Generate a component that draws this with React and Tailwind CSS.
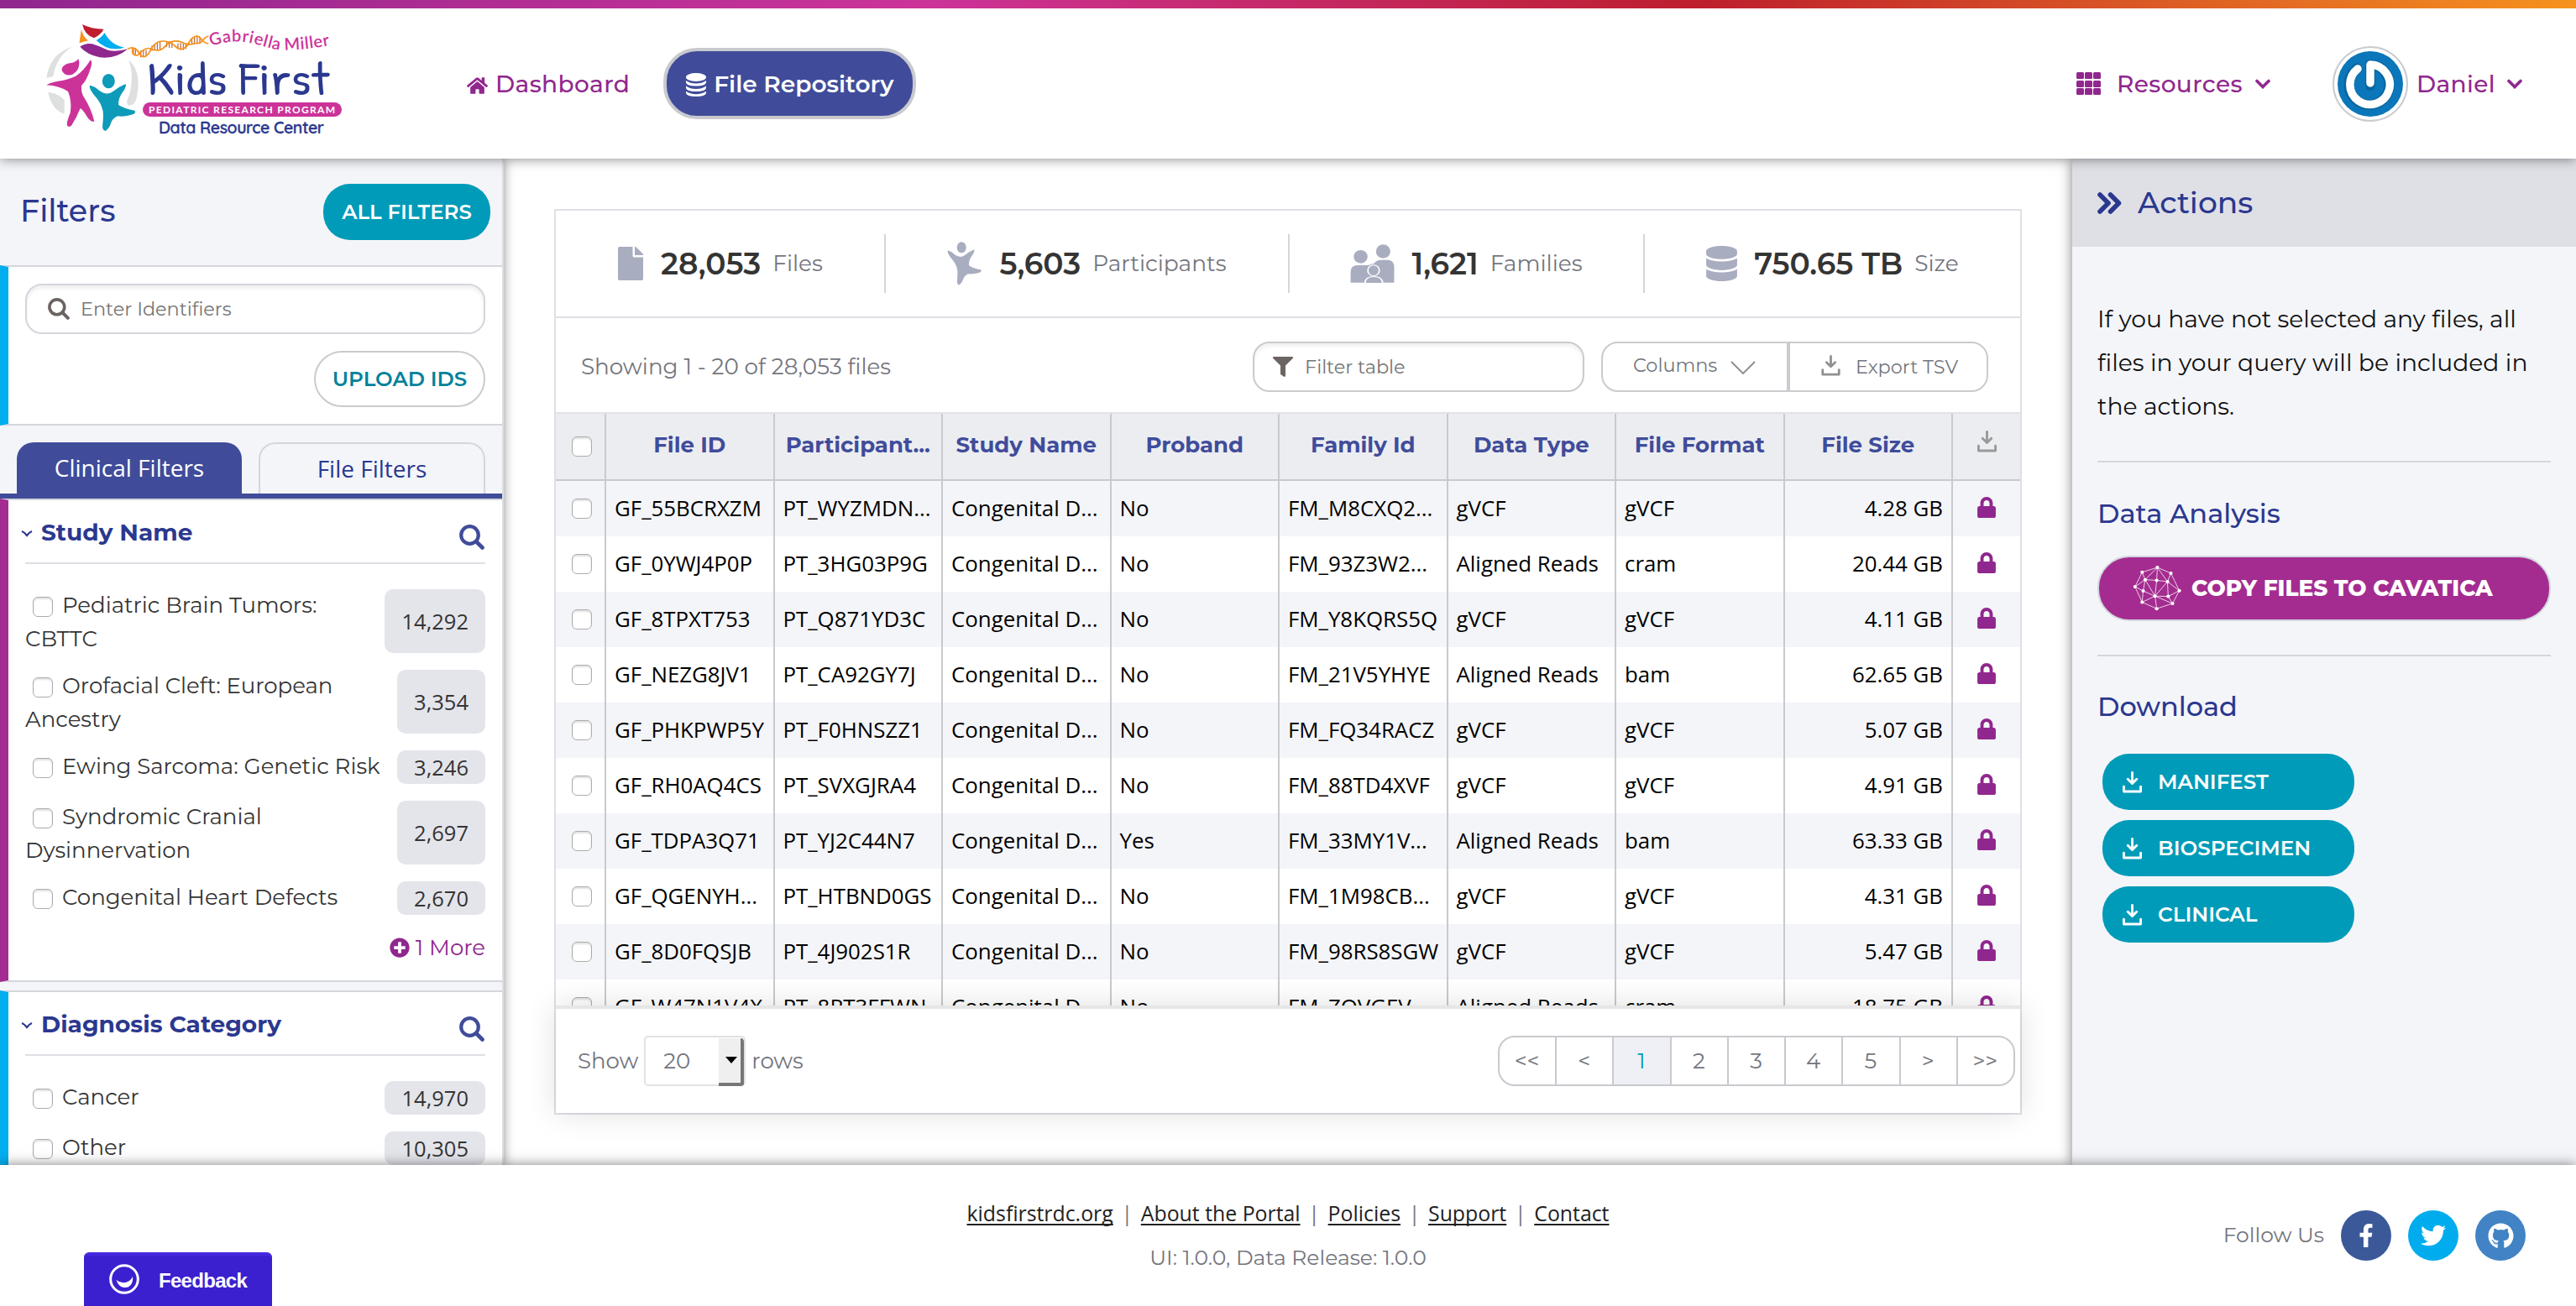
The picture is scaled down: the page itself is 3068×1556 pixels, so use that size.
import React from "react";
import {
  FaHome,
  FaDatabase,
  FaFile,
  FaFilter,
  FaLock,
  FaPlusCircle,
  FaFacebookF,
  FaTwitter,
  FaGithub,
} from "react-icons/fa";

const CHILD_BODY =
  "M270 308 Q285 310 300 328 Q322 346 340 330 Q360 312 378 303 Q382 310 372 328 Q355 355 357 378 Q375 392 405 398 Q412 405 400 412 Q375 422 355 418 Q340 425 335 440 Q330 460 318 471 Q307 468 309 450 Q312 420 310 400 Q305 370 285 345 Q268 320 270 308Z";

function Logo() {
  return (
    <svg className="h-[135px] w-[355px]" viewBox="55 28 355 135" fill="none">
      <g transform="scale(0.3954 0.3333)">
        <g fill="#dedfdf">
          <path d="M217 170 Q150 195 140 282 L160 275 Q170 205 217 170Z" />
          <path d="M145 332 Q180 340 194 360 L194 410 Q155 395 145 332Z" />
          <path d="M387 217 Q430 260 410 360 Q400 385 385 378 Q378 370 390 340 Q405 270 387 217Z" />
        </g>
        <path fill="#be1e2d" d="M248 90 Q275 107 312 107 Q306 125 283 139 Q255 128 248 90Z" />
        <path fill="#f6921e" d="M245 108 Q250 135 266 148 Q252 152 239 157 Q242 130 245 108Z" />
        <path fill="#00aeef" d="M315 120 Q335 165 375 173 Q325 190 290 147 Q305 138 315 120Z" />
        <path fill="#90278e" d="M241 170 Q258 155 278 160 Q300 168 325 182 Q350 190 385 178 Q350 215 300 208 Q262 198 241 170Z" />
        <g fill="#cc3399">
          <path d="M236 213 Q243 235 232 255 Q215 280 195 268 Q183 255 187 245 Q195 230 215 228 Q230 224 236 213Z" />
          <path d="M273 217 Q280 225 272 250 Q262 290 245 310 Q244 330 250 345 Q275 390 284 437 Q275 440 265 425 Q250 395 242 390 Q230 425 215 452 Q205 460 202 450 Q200 440 212 405 Q217 365 205 330 Q180 310 140 307 Q150 298 175 293 Q200 290 228 275 Q250 260 273 217Z" />
        </g>
        <g fill="#0e9ab9">
          <ellipse cx="327" cy="293" rx="19" ry="26" />
          <path d={CHILD_BODY} />
        </g>
        <g stroke="#c1622a" strokeWidth="3">
          <path d="M402 176v22M408 174v26M424 184v24M432 180v26M440 182v20M458 166v18M466 160v24M474 154v28M482 152v30M502 150v20M510 150v24M518 152v22M536 158v20M544 156v26M552 158v24M560 160v18M578 142v20M586 136v26M594 134v26M602 136v24" />
        </g>
        <g stroke="#f6921e" strokeWidth="5">
          <path d="M385 178 Q405 165 418 190 Q432 222 450 190 Q465 150 490 150 Q510 150 525 165 Q545 192 565 165 Q580 126 600 134 Q615 160 628 158" />
          <path d="M400 175 Q395 205 415 200 Q440 165 460 180 Q485 190 500 165 Q520 143 545 152 Q565 168 585 158 Q605 160 612 145 Q618 135 628 132" />
        </g>
      </g>
      <path id="gm-curve" d="M251 56 C268 51 282 48 302 53 S328 61 343 60.500 S376 58.500 404 53" />
      <text fill="#cc3399" fontSize="20" fontFamily="Lato, Inter, sans-serif">
        <textPath href="#gm-curve" textLength="144">Gabriella Miller</textPath>
      </text>
      <text
        x="175"
        y="114"
        fill="#2b388f"
        fontSize="55"
        fontFamily="'Patrick Hand', Quicksand, Comfortaa, 'Open Sans', sans-serif"
        textLength="217"
        lengthAdjust="spacingAndGlyphs"
      >
        Kids First
      </text>
      <rect x="170" y="123" width="237" height="17" rx="8.500" fill="#cc3399" />
      <text x="177" y="136" fill="#ffffff" fontSize="12" fontWeight="700" fontFamily="Lato, sans-serif" textLength="222">
        PEDIATRIC RESEARCH PROGRAM
      </text>
      <text x="189" y="159.500" fill="#2b388f" stroke="#2b388f" strokeWidth="0.300" fontSize="19.500" fontFamily="Quicksand, 'Open Sans', sans-serif" textLength="197">
        Data Resource Center
      </text>
    </svg>
  );
}

function SearchIcon({ className }) {
  return (
    <svg className={className} viewBox="0 0 30 30" fill="none" stroke="currentColor">
      <circle cx="12.500" cy="12.500" r="10.300" strokeWidth="4.200" />
      <path d="M20.500 20.500 27.500 27.500" strokeWidth="4.600" strokeLinecap="round" />
    </svg>
  );
}

function ChevronDown({ className }) {
  return (
    <svg className={`h-[12px] w-[18px] ${className}`} viewBox="0 0 18 12" fill="none" stroke="currentColor" strokeWidth="3.600" strokeLinecap="round">
      <path d="M2 2.500 9 9.500 16 2.500" />
    </svg>
  );
}

function DownloadIcon({ className }) {
  return (
    <svg className={className} viewBox="0 0 24 27" fill="none" stroke="currentColor" strokeWidth="3" strokeLinecap="round" strokeLinejoin="round">
      <path d="M12 1.500V14M6.500 9.500 12 15l5.500-5.500" />
      <path d="M1.500 19v6h21v-6" />
    </svg>
  );
}

function StackIcon({ className }) {
  return (
    <svg className={className} viewBox="0 0 24 28" fill="currentColor">
      <ellipse cx="12" cy="5" rx="12" ry="5" />
      <path d="M0 9q5 3.500 12 3.500T24 9v2.500q-1 4-12 4T0 11.500z" />
      <path d="M0 15.500q5 3.500 12 3.500t12-3.500V18q-1 4-12 4T0 18z" />
      <path d="M0 21.800q5 3.400 12 3.400t12-3.400V24q-1 4-12 4T0 24z" />
    </svg>
  );
}

function PersonIcon() {
  return (
    <svg className="h-[52px] w-[42px]" viewBox="268 266 144 207" preserveAspectRatio="none" fill="currentColor">
      <ellipse cx="327" cy="293" rx="19" ry="26" />
      <path d={CHILD_BODY} />
    </svg>
  );
}

function FamilyIcon() {
  return (
    <svg className="h-[46px] w-[53px]" viewBox="119 182 93 140" preserveAspectRatio="none" fill="currentColor">
      <ellipse cx="141" cy="227" rx="14.500" ry="24" />
      <ellipse cx="188" cy="208" rx="15" ry="25" />
      <path d="M120 321V282Q120 258 135 258H156V321Z" />
      <path d="M170 321V250Q174 239 184 239H198Q211 240 211 265V321Z" />
      <path d="M150 321V262L172 250 180 258V321Z" />
      <ellipse cx="168" cy="277" rx="12" ry="20" stroke="#fff" strokeWidth="3" />
      <path d="M150 325Q150 299 168 299Q187 299 187 325Z" stroke="#fff" strokeWidth="3" />
    </svg>
  );
}

const NODES = [
  [278, 319], [323, 304], [363, 322], [287, 342], [321, 344], [353, 348], [257, 364],
  [281, 377], [388, 376], [316, 393], [355, 394], [278, 412], [368, 416], [321, 432],
];
const EDGES = [
  [0, 1], [1, 2], [0, 3], [1, 3], [1, 4], [1, 5], [2, 5], [3, 4], [4, 5], [0, 6], [3, 6], [6, 7], [3, 7],
  [2, 8], [5, 8], [5, 9], [5, 10], [7, 9], [3, 9], [4, 9], [9, 10], [8, 10], [6, 11], [7, 11], [9, 11],
  [9, 12], [10, 12], [8, 12], [11, 13], [9, 13], [12, 13],
];

function CavaticaIcon() {
  return (
    <svg className="h-[56px] w-[58px]" viewBox="250 296 144 146" preserveAspectRatio="none">
      {EDGES.map(([a, b], i) => (
        <line key={i} x1={NODES[a][0]} y1={NODES[a][1]} x2={NODES[b][0]} y2={NODES[b][1]} stroke="#fff" strokeWidth="2.200" opacity="0.9" />
      ))}
      {NODES.map(([x, y], i) => (
        <circle key={i} cx={x} cy={y} r="5.200" fill="#fff" />
      ))}
    </svg>
  );
}

function Checkbox({ className = "" }) {
  return (
    <span
      className={`inline-block h-6 w-6 rounded-[6px] border-[1.500px] border-[#acacac] bg-white shadow-[inset_0_2px_2px_rgba(0,0,0,0.12)] ${className}`}
    />
  );
}

function Header() {
  return (
    <header className="relative z-30 shrink-0 bg-white shadow-[0_0_14px_rgba(0,0,0,0.5)]">
      <div className="h-[10px] bg-[linear-gradient(to_right,#90278e_0%,#cc3399_36%,#be1e2d_66%,#f6921e_100%)]" />
      <div className="flex h-[179px] items-center pl-[55px] pr-[64px] text-[28px] font-semibold text-[#90278e]">
        <div className="-mt-[10px]">
          <Logo />
        </div>
        <div className="ml-[146px] flex items-center gap-[9px] font-medium tracking-[0.4px]">
          <FaHome className="mt-[4px] h-[24px] w-[25px]" />
          <span>Dashboard</span>
        </div>
        <div className="ml-[40px] flex h-[85px] w-[301px] items-center justify-center gap-[9px] rounded-[40px] border-4 border-[#c9cacf] bg-[#404c9a] text-white">
          <StackIcon className="mt-[2px] h-[28px] w-[24px]" />
          <span>File Repository</span>
        </div>
        <div className="ml-auto flex items-center font-medium tracking-[0.4px]">
          <div className="grid grid-cols-3 gap-[1.500px]">
            {Array.from({ length: 9 }, (_, i) => (
              <span key={i} className="h-[8px] w-[8.500px] rounded-[1.500px] bg-[#90278e]" />
            ))}
          </div>
          <span className="ml-[19px]">Resources</span>
          <ChevronDown className="ml-[15px]" />
          <div className="ml-[74px] flex h-[90px] w-[90px] items-center justify-center rounded-full border-2 border-[#cacbcf]">
            <svg className="h-[78px] w-[78px] rounded-full bg-[#0b76b9]" viewBox="0 0 78 78" fill="none">
              <path d="M39 41V16A24 24 0 1 1 23.500 20.500" stroke="#0a4a78" strokeOpacity="0.4" strokeWidth="12" strokeLinecap="round" strokeLinejoin="round" />
              <path d="M39 38V16A23.700 23.700 0 1 1 24 21" stroke="#fff" strokeWidth="9.500" strokeLinecap="round" strokeLinejoin="round" />
            </svg>
          </div>
          <span className="ml-[10px]">Daniel</span>
          <ChevronDown className="ml-[14px]" />
        </div>
      </div>
    </header>
  );
}

function FacetTitle({ children }) {
  return (
    <div className="flex h-[76px] items-center border-b-2 border-[#dfe0e6] text-[28px] font-bold leading-[34px] text-[#2b388f]">
      <svg className="-ml-[5px] mt-[5px] h-[8px] w-[14px]" viewBox="0 0 14 8" fill="none" stroke="#2b388f" strokeWidth="2.200">
        <path d="M1 1q3 1 6 5 3-4 6-5" />
      </svg>
      <span className="ml-[10px] mt-[2px]">{children}</span>
      <SearchIcon className="ml-auto mr-[1px] mt-[13px] h-[30px] w-[30px] text-[#404c9a]" />
    </div>
  );
}

function FacetRow({ label, count, tall }) {
  return (
    <div className={`flex justify-between ${tall ? "h-[76px]" : "h-[40px]"}`}>
      <div className="-mt-px min-w-0 flex-1 leading-[40px] text-[#343434]">
        <Checkbox className="ml-[9px] mr-[11px] align-[-5px]" />
        {label}
      </div>
      <div className="flex items-center rounded-[10px] bg-[#e4e5eb] px-[20px] font-['Open_Sans',sans-serif] text-[25.500px] text-[#343434]">
        {count}
      </div>
    </div>
  );
}

const STUDIES = [
  ["Pediatric Brain Tumors: CBTTC", "14,292", true],
  ["Orofacial Cleft: European Ancestry", "3,354", true],
  ["Ewing Sarcoma: Genetic Risk", "3,246", false],
  ["Syndromic Cranial Dysinnervation", "2,697", true],
  ["Congenital Heart Defects", "2,670", false],
];
const DIAGNOSES = [
  ["Cancer", "14,970", false],
  ["Other", "10,305", false],
];

function FilterPanel() {
  return (
    <aside className="relative z-10 h-full w-[600px] shrink-0 overflow-visible border-r-2 border-[#dcdde3] bg-[#f4f5f9] text-[26px] shadow-[0_0_12px_rgba(0,0,0,0.45)]">
      <div className="flex h-[127px] items-center justify-between pl-[24px] pr-[14px]">
        <h2 className="-mt-[3px] text-[36.500px] font-medium text-[#2b388f]">Filters</h2>
        <button className="h-[67px] w-[199px] rounded-[32px] bg-[#009bb8] text-[24.400px] font-semibold text-white">ALL FILTERS</button>
      </div>
      <div className="h-[191px] border-y-2 border-l-[10px] border-y-[#d4d6dd] border-l-[#00aeef] bg-white px-[20px] pt-[20px]">
        <div className="flex h-[60px] items-center gap-[13px] rounded-[20px] border-2 border-[#d4d6dd] pl-[25px] text-[22.400px] text-[#757575] shadow-[inset_0_4px_4px_rgba(0,0,0,0.06)]">
          <SearchIcon className="h-[26px] w-[26px] text-[#6b6462]" />
          <span className="mt-[1px]">Enter Identifiers</span>
        </div>
        <button className="ml-auto mt-[20px] block h-[67px] w-[204px] rounded-[34px] border-2 border-[#cacbcf] bg-white text-[24.500px] font-semibold text-[#04829b]">
          UPLOAD IDS
        </button>
      </div>
      <div className="flex h-[87px] gap-[20px] border-b-[6px] border-[#404c9a] px-[20px] pt-[20px] font-['Open_Sans',sans-serif] text-[28px]">
        <div className="flex w-[268px] items-center justify-center rounded-t-[20px] bg-[#404c9a] pb-[2px] text-white">Clinical Filters</div>
        <div className="flex flex-1 items-center justify-center rounded-t-[20px] border-x-2 border-t-2 border-[#d4d6dd] pb-[2px] text-[#2b388f]">File Filters</div>
      </div>
      <div className="h-[576px] border-y-2 border-l-[10px] border-y-[#d4d6dd] border-l-[#a42c90] bg-white px-[20px]">
        <FacetTitle>Study Name</FacetTitle>
        <div className="mt-[30px] flex flex-col gap-[20px]">
          {STUDIES.map(([l, c, t]) => (
            <FacetRow key={l} label={l} count={c} tall={t} />
          ))}
        </div>
        <div className="mt-[19px] flex items-center justify-end gap-[7px] leading-[40px] text-[#90278e]">
          <FaPlusCircle className="h-[24px] w-[24px]" />
          <span>1 More</span>
        </div>
      </div>
      <div className="mt-[10px] h-[208px] overflow-hidden border-l-[10px] border-t-2 border-l-[#00aeef] border-t-[#d4d6dd] bg-white px-[20px]">
        <FacetTitle>Diagnosis Category</FacetTitle>
        <div className="mt-[30px] flex flex-col gap-[20px]">
          {DIAGNOSES.map(([l, c, t]) => (
            <FacetRow key={l} label={l} count={c} tall={t} />
          ))}
        </div>
      </div>
    </aside>
  );
}

function Stat({ icon, value, label, className }) {
  return (
    <div className={`flex h-[70px] items-center justify-center border-[#d4d6dd] text-[#a9adc0] ${className}`}>
      {icon}
      <span className="ml-[20px] text-[36px] font-semibold text-[#343434]">{value}</span>
      <span className="ml-[14px] text-[26.400px] text-[#74757d]">{label}</span>
    </div>
  );
}

const COLUMNS = ["File ID", "Participant...", "Study Name", "Proband", "Family Id", "Data Type", "File Format", "File Size"];
const ROWS = [
  ["GF_55BCRXZM", "PT_WYZMDN...", "Congenital D...", "No", "FM_M8CXQ2...", "gVCF", "gVCF", "4.28 GB"],
  ["GF_0YWJ4P0P", "PT_3HG03P9G", "Congenital D...", "No", "FM_93Z3W2...", "Aligned Reads", "cram", "20.44 GB"],
  ["GF_8TPXT753", "PT_Q871YD3C", "Congenital D...", "No", "FM_Y8KQRS5Q", "gVCF", "gVCF", "4.11 GB"],
  ["GF_NEZG8JV1", "PT_CA92GY7J", "Congenital D...", "No", "FM_21V5YHYE", "Aligned Reads", "bam", "62.65 GB"],
  ["GF_PHKPWP5Y", "PT_F0HNSZZ1", "Congenital D...", "No", "FM_FQ34RACZ", "gVCF", "gVCF", "5.07 GB"],
  ["GF_RH0AQ4CS", "PT_SVXGJRA4", "Congenital D...", "No", "FM_88TD4XVF", "gVCF", "gVCF", "4.91 GB"],
  ["GF_TDPA3Q71", "PT_YJ2C44N7", "Congenital D...", "Yes", "FM_33MY1V...", "Aligned Reads", "bam", "63.33 GB"],
  ["GF_QGENYH...", "PT_HTBND0GS", "Congenital D...", "No", "FM_1M98CB...", "gVCF", "gVCF", "4.31 GB"],
  ["GF_8D0FQSJB", "PT_4J902S1R", "Congenital D...", "No", "FM_98RS8SGW", "gVCF", "gVCF", "5.47 GB"],
  ["GF_W47N1V4X", "PT_8RT3FFWN", "Congenital D...", "No", "FM_ZQVGEV...", "Aligned Reads", "cram", "18.75 GB"],
];

function FileTable() {
  return (
    <div className="flex min-h-0 flex-1 flex-col">
      <div className="grid h-[82px] shrink-0 grid-cols-[60px_repeat(8,200.500px)_80px] border-y-2 border-b-[#c9cace] border-t-[#e2e2e4] bg-[#ecedf1] text-[26px] font-bold text-[#404c9a]">
        <div className="flex items-center justify-center border-r-2 border-[#c9cace] pl-[4px]">
          <Checkbox />
        </div>
        {COLUMNS.map((c) => (
          <div key={c} className="flex items-center justify-center border-r-2 border-[#c9cace] pb-[3px]">
            {c}
          </div>
        ))}
        <div className="flex items-center justify-center pb-[12px] text-[#999999]">
          <DownloadIcon className="h-[26px] w-[23px]" />
        </div>
      </div>
      <div className="min-h-0 flex-1 overflow-hidden font-['Open_Sans',sans-serif] text-[25.850px] text-black">
        {ROWS.map((row, r) => (
          <div
            key={row[0]}
            className={`grid h-[66px] grid-cols-[60px_repeat(8,200.500px)_80px] ${r % 2 ? "bg-white" : "bg-[#f4f5f9]"}`}
          >
            <div className="flex items-center justify-center border-r-2 border-[#c9cace] pl-[4px]">
              <Checkbox />
            </div>
            {row.map((v, i) => (
              <div
                key={i}
                className={`flex items-center whitespace-nowrap border-r-2 border-[#c9cace] px-[10px] pb-[2px] ${i === 7 ? "justify-end" : ""}`}
              >
                {v}
              </div>
            ))}
            <div className="flex items-center justify-center pb-[4px] text-[#90278e]">
              <FaLock className="h-[25px] w-[22px]" />
            </div>
          </div>
        ))}
      </div>
    </div>
  );
}

const PAGES = ["<<", "<", "1", "2", "3", "4", "5", ">", ">>"];

function Main() {
  return (
    <main className="flex min-w-0 flex-1 bg-white p-[60px]">
      <section className="flex flex-1 flex-col border-2 border-[#dfe0e6] bg-white">
        <div className="flex h-[128px] shrink-0 items-center border-b-2 border-[#dfe0e6]">
          <Stat className="w-[393px] border-r-2" icon={<FaFile className="h-[40px] w-[32px]" />} value="28,053" label="Files" />
          <Stat className="w-[481px] border-r-2" icon={<PersonIcon />} value="5,603" label="Participants" />
          <Stat className="w-[423px] border-r-2" icon={<FamilyIcon />} value="1,621" label="Families" />
          <Stat className="flex-1" icon={<FaDatabase className="h-[42px] w-[37px]" />} value="750.65 TB" label="Size" />
        </div>
        <div className="flex h-[112px] shrink-0 items-center pl-[30px] pr-[38px] pt-[4px] text-[#74757d]">
          <span className="mt-[2px] text-[26.200px]">Showing 1 - 20 of 28,053 files</span>
          <div className="ml-auto flex h-[60px] w-[395px] items-center gap-[14px] rounded-[20px] border-2 border-[#cacbcf] pl-[22px] text-[22.400px] text-[#757575] shadow-[inset_0_4px_4px_rgba(0,0,0,0.06)]">
            <FaFilter className="h-[24px] w-[24px] text-[#6b6462]" />
            <span className="mt-[1px]">Filter table</span>
          </div>
          <div className="ml-[20px] flex h-[60px] w-[461px] text-[22.400px]">
            <div className="flex w-[223px] items-center rounded-l-[20px] border-2 border-[#cacbcf] pl-[36px]">
              <span className="-mt-[2px]">Columns</span>
              <svg className="ml-[16px] mt-[2px] h-[16px] w-[30px]" viewBox="0 0 30 16" fill="none" stroke="#8a8a90" strokeWidth="1.800">
                <path d="M1 1 15 15 29 1" />
              </svg>
            </div>
            <div className="flex flex-1 items-center rounded-r-[20px] border-2 border-[#cacbcf] pl-[37px]">
              <DownloadIcon className="-mt-[4px] h-[25px] w-[23px] text-[#909090]" />
              <span className="ml-[18px] mt-[1px]">Export TSV</span>
            </div>
          </div>
        </div>
        <FileTable />
        <div className="flex h-[128px] shrink-0 items-center border-t-4 border-[#e6e6e6] bg-white pl-[26px] pr-[6px] text-[26px] text-[#74757d] shadow-[0_0_34px_rgba(0,0,0,0.13)]">
          <span>Show</span>
          <div className="ml-[7px] flex h-[60px] w-[121px] items-center rounded-[5px] border-2 border-[#e2e2e4] pl-[21px]">
            20
            <div className="ml-auto mt-[2px] flex h-[57px] w-[30px] items-center justify-center rounded-r-[4px] border-b-4 border-r-4 border-[#777777] bg-[#efefef] pl-[3px]">
              <svg className="h-[8px] w-[14px]" viewBox="0 0 14 8">
                <path d="M0 0H14L7 8Z" fill="#000" />
              </svg>
            </div>
          </div>
          <span className="ml-[7px]">rows</span>
          <div className="ml-auto flex h-[60px] w-[616px] overflow-hidden rounded-[20px] border-2 border-[#c9cacf]">
            {PAGES.map((p, i) => (
              <div
                key={p}
                className={`flex flex-1 items-center justify-center pr-[1px] ${i < 8 ? "border-r-2 border-[#c9cacf]" : ""} ${
                  p === "1" ? "bg-[#eff0f6] text-[#009bb8]" : ""
                }`}
              >
                {p}
              </div>
            ))}
          </div>
        </div>
      </section>
    </main>
  );
}

function ActionsPanel() {
  return (
    <aside className="relative z-10 h-full w-[600px] shrink-0 bg-[#f4f5f9] shadow-[0_0_14px_rgba(0,0,0,0.5)]">
      <div className="flex h-[105px] items-center bg-[#dfe0e6] pl-[30px] text-[#2b388f]">
        <svg className="h-[26px] w-[29px]" viewBox="0 0 29 26" fill="none" stroke="currentColor" strokeWidth="5.600" strokeLinecap="round" strokeLinejoin="round">
          <path d="M3 3 13 13 3 23M15.500 3 25.500 13 15.500 23" />
        </svg>
        <h2 className="-mt-[2px] ml-[19px] text-[36px] font-medium">Actions</h2>
      </div>
      <div className="px-[30px] pt-[60px] text-[#2b388f]">
        <p className="whitespace-nowrap text-[28.200px] leading-[52px] text-[#111111]">
          If you have not selected any files, all
          <br />
          files in your query will be included in
          <br />
          the actions.
        </p>
        <hr className="mt-[39px] border-t-2 border-[#d4d6dd]" />
        <h3 className="mt-[41px] text-[32px] font-medium leading-[40px]">Data Analysis</h3>
        <button className="mt-[30px] flex h-[78px] w-full items-center rounded-[38px] border-2 border-[#d4d6dd] bg-[#a42c90] pl-[40px] text-[26.300px] font-extrabold text-white">
          <CavaticaIcon />
          <span className="ml-[12px] mt-[1px]">COPY FILES TO CAVATICA</span>
        </button>
        <hr className="mt-[40px] border-t-2 border-[#d4d6dd]" />
        <h3 className="mt-[40px] text-[32px] font-medium leading-[40px]">Download</h3>
        <div className="ml-[6px] mt-[36px] flex flex-col gap-[12px]">
          {["MANIFEST", "BIOSPECIMEN", "CLINICAL"].map((t) => (
            <button key={t} className="flex h-[67px] w-[300px] items-center rounded-[32px] bg-[#009bb8] pl-[24px] text-[24.600px] font-semibold text-white">
              <DownloadIcon className="h-[26px] w-[23px]" />
              <span className="ml-[19px]">{t}</span>
            </button>
          ))}
        </div>
      </div>
    </aside>
  );
}

const LINKS = ["kidsfirstrdc.org", "About the Portal", "Policies", "Support", "Contact"];

function Footer() {
  return (
    <footer className="relative z-30 grid h-[168px] shrink-0 grid-cols-[1fr_auto_1fr] bg-white text-[25px] text-[#74757d] shadow-[0_0_14px_rgba(0,0,0,0.5)]">
      <div />
      <div className="flex flex-col items-center pt-[37px] leading-[40px]">
        <div className="flex font-['Open_Sans',sans-serif] text-[24.850px]">
          {LINKS.map((l, i) => (
            <React.Fragment key={l}>
              {i > 0 && <span className="w-[33px] text-center">|</span>}
              <a className="text-[#222222] underline decoration-2 underline-offset-[3px] [text-decoration-skip-ink:none]">{l}</a>
            </React.Fragment>
          ))}
        </div>
        <div className="mt-[13px]">UI: 1.0.0, Data Release: 1.0.0</div>
      </div>
      <div className="flex items-center justify-end gap-[20px] pr-[60px] text-white">
        <span className="text-[#74757d]">Follow Us</span>
        <span className="flex h-[60px] w-[60px] items-center justify-center rounded-full bg-[#3b5998]">
          <FaFacebookF className="h-[28px] w-[28px]" />
        </span>
        <span className="flex h-[60px] w-[60px] items-center justify-center rounded-full bg-[#00acee]">
          <FaTwitter className="h-[30px] w-[30px]" />
        </span>
        <span className="flex h-[60px] w-[60px] items-center justify-center rounded-full bg-[#4183c4]">
          <FaGithub className="h-[31px] w-[31px]" />
        </span>
      </div>
      <button className="absolute bottom-0 left-[100px] flex h-[64px] w-[224px] items-center rounded-t-[6px] border-t-4 border-[#4429e0] bg-[#3b20cf] pl-[30px] font-['Liberation_Sans',sans-serif] text-[24px] font-bold tracking-[-0.700px] text-white">
        <svg className="-mt-[4px] h-[36px] w-[36px]" viewBox="0 0 36 36" fill="none">
          <circle cx="18" cy="18" r="16.300" stroke="#fff" strokeWidth="3" />
          <path d="M8.500 19Q16 25 24 20 27 17.500 28 15 29 24 22.500 27.500 12 30 8.500 19Z" fill="#fff" />
        </svg>
        <span className="-mt-[1px] ml-[23px]">Feedback</span>
      </button>
    </footer>
  );
}

export default function App() {
  return (
    <div className="flex h-[1556px] w-[3068px] flex-col overflow-hidden bg-white font-[Montserrat,Inter,sans-serif]">
      <Header />
      <div className="flex h-[1199px] shrink-0">
        <FilterPanel />
        <Main />
        <ActionsPanel />
      </div>
      <Footer />
    </div>
  );
}
